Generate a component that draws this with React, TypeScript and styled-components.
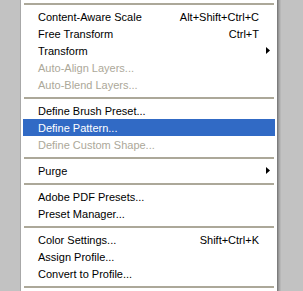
import React from "react";
import styled, { createGlobalStyle } from "styled-components";

const Global = createGlobalStyle`
  html, body { margin: 0; padding: 0; background: #c2c2c2; }
  body { width: 303px; height: 291px; overflow: hidden; }
`;

const Page = styled.div`
  padding-left: 20px;
  height: 291px;
  overflow: hidden;
`;

const Menu = styled.div`
  width: 255px;
  margin-top: -1px;
  background: #ffffff;
  border-left: 1px solid #a8a8a8;
  border-right: 1px solid #7d7d7d;
  padding: 0 2px;
  box-sizing: content-box;
  box-shadow: 1px 0 0 #959595, 2px 0 0 #a9a9a9, 3px 0 0 #b7b7b7;
  font-family: "Liberation Sans", Arial, sans-serif;
  font-size: 11px;
  display: flex;
  flex-direction: column;
  box-sizing: border-box;
  width: 258px;
`;

const Separator = styled.div`
  height: 9px;
  display: flex;
  align-items: center;
  padding: 0 1px;
  &::after {
    content: "";
    flex: 1;
    height: 2px;
    background: #aca899;
  }
`;

const Row = styled.div<{ $active?: boolean; $disabled?: boolean }>`
  height: 17px;
  display: grid;
  grid-template-columns: 1fr auto 16px;
  align-items: center;
  padding-left: 15px;
  background: ${(p) => (p.$active ? "#316ac5" : "transparent")};
  color: ${(p) => (p.$active ? "#ffffff" : p.$disabled ? "#aca899" : "#000000")};
  white-space: nowrap;
`;

const Label = styled.span``;
const Shortcut = styled.span`
  text-align: right;
`;
const Arrow = styled.svg`
  margin-left: 7px;
  display: block;
`;

type Item =
  | { sep: true }
  | { label: string; shortcut?: string; sub?: boolean; disabled?: boolean; active?: boolean };

const items: Item[] = [
  { sep: true },
  { label: "Content-Aware Scale", shortcut: "Alt+Shift+Ctrl+C" },
  { label: "Free Transform", shortcut: "Ctrl+T" },
  { label: "Transform", sub: true },
  { label: "Auto-Align Layers...", disabled: true },
  { label: "Auto-Blend Layers...", disabled: true },
  { sep: true },
  { label: "Define Brush Preset..." },
  { label: "Define Pattern...", active: true },
  { label: "Define Custom Shape...", disabled: true },
  { sep: true },
  { label: "Purge", sub: true },
  { sep: true },
  { label: "Adobe PDF Presets..." },
  { label: "Preset Manager..." },
  { sep: true },
  { label: "Color Settings...", shortcut: "Shift+Ctrl+K" },
  { label: "Assign Profile..." },
  { label: "Convert to Profile..." },
  { sep: true },
];

export default function App() {
  return (
    <>
      <Global />
      <Page>
        <Menu>
          {items.map((it, i) =>
            "sep" in it ? (
              <Separator key={i} />
            ) : (
              <Row key={i} $active={it.active} $disabled={it.disabled}>
                <Label>{it.label}</Label>
                <Shortcut>{it.shortcut ?? ""}</Shortcut>
                {it.sub ? (
                  <Arrow width="4" height="7" viewBox="0 0 4 7">
                    <polygon points="0,0 4,3.5 0,7" fill={it.active ? "#fff" : "#000"} />
                  </Arrow>
                ) : (
                  <span />
                )}
              </Row>
            )
          )}
        </Menu>
      </Page>
    </>
  );
}
